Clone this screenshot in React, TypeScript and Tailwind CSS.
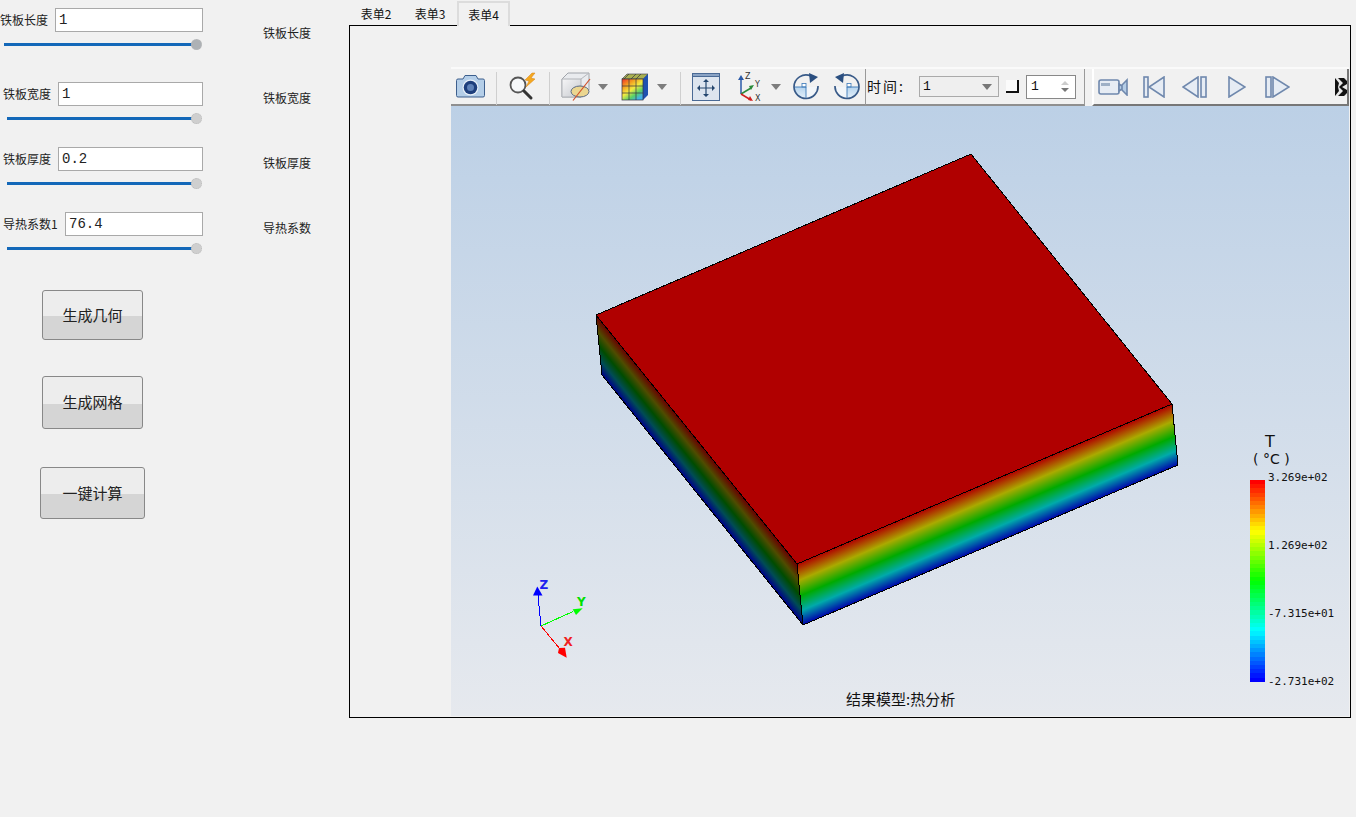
import React from "react";

const CJK = "font-['Noto_Sans_CJK_SC','Noto_Sans',sans-serif]";
const VAL = "font-['Liberation_Mono','Noto_Sans_CJK_SC',monospace]";
const MONO = "font-['DejaVu_Sans_Mono',monospace]";

function Group({ label, right, value, inputW, sliderW, handle, rightTop, mt, labelPl }: { label: string; right: string; value: string; inputW: string; sliderW: string; handle: string; rightTop: string; mt: string; labelPl: string }) {
  return (
    <div className={`flex ${mt}`}>
      <div className="w-[203px] shrink-0">
        <div className="flex h-6 items-center justify-between">
          <span className={`text-[12px] leading-none text-[#222] ${labelPl}`}>{label}</span>
          <div className={`flex h-6 items-center border border-[#a9a9a9] bg-white pl-[3px] pt-px text-[14px] text-[#222] ${VAL} ${inputW}`}>{value}</div>
        </div>
        <div className="mt-[6px] flex h-3 items-center justify-end pr-[1px]">
          <div className={`h-[3px] bg-[#1368b9] ${sliderW}`} />
          <div className={`-ml-[1px] h-[11px] w-[11px] rounded-full border border-dotted border-[#bbb] ${handle}`} />
        </div>
      </div>
      <span className={`ml-[60px] text-[12px] leading-none text-[#222] ${rightTop}`}>{right}</span>
    </div>
  );
}

function Btn({ text, cls }: { text: string; cls: string }) {
  return (
    <div className={`flex items-center justify-center rounded-[3px] border border-[#888] bg-[linear-gradient(to_bottom,#ededed_52%,#d5d5d5_52%)] text-[15px] text-[#222] ${cls}`}>
      {text}
    </div>
  );
}

const Sep = () => <div className="mt-[3px] h-[33px] w-px shrink-0 bg-[#cfcfcf]" />;
const Drop = () => (
  <svg width="10" height="6" viewBox="0 0 10 6"><path d="M0 0h10L5 6z" fill="#7d7d7d" /></svg>
);

function Camera() {
  return (
    <svg width="29" height="24" viewBox="0 0 29 24">
      <path d="M2 5h5l2-3.500h11L22 5h5a1.500 1.500 0 0 1 1.500 1.500v15A1.500 1.500 0 0 1 27 23H2a1.500 1.500 0 0 1-1.500-1.500v-15A1.500 1.500 0 0 1 2 5z" fill="#b4cee8" stroke="#3d5f8d" />
      <circle cx="14.500" cy="13.500" r="8" fill="#e8f0f8" />
      <circle cx="14.500" cy="13.500" r="6.800" fill="#1e3f7c" />
      <circle cx="14.500" cy="13.500" r="3.500" fill="#5f82b8" />
    </svg>
  );
}
function Search() {
  return (
    <svg width="30" height="30" viewBox="0 0 30 30">
      <circle cx="10" cy="13" r="7.500" fill="#f6f8fa" stroke="#555" strokeWidth="1.800" />
      <path d="M16 19l7 7" stroke="#333" strokeWidth="3" strokeLinecap="round" />
      <path d="M24 1l-7 7 4 1-3 6 9-8-4-1 4-5z" fill="#f4a820" stroke="#d88010" strokeWidth=".5" />
    </svg>
  );
}
function ClipCube() {
  return (
    <svg width="30" height="29" viewBox="0 0 30 29">
      <defs>
        <linearGradient id="cf" x1="0" y1="0" x2="1" y2="1"><stop offset="0" stopColor="#f6f6f7" /><stop offset="1" stopColor="#c6c9ce" /></linearGradient>
      </defs>
      <path d="M1 7l6-6h21v17l-8 7H1z" fill="#e9ebee" stroke="#a0a4aa" />
      <path d="M1 7h19v18H1z" fill="url(#cf)" stroke="#b0b3b8" />
      <path d="M20 7l8-6" stroke="#b5b8bd" />
      <ellipse cx="19" cy="19.500" rx="9" ry="5.500" fill="#ebd690" stroke="#5a6a85" />
      <path d="M12 28.500L29 7" stroke="#d0502a" strokeWidth="1.200" />
    </svg>
  );
}
function ColorCube() {
  return (
    <svg width="28" height="28" viewBox="0 0 28 28">
      <defs>
        <linearGradient id="cc" x1="0" y1="0" x2="0.7" y2="1">
          <stop offset="0" stopColor="#f03028" /><stop offset=".3" stopColor="#f4a020" /><stop offset=".55" stopColor="#f4ec40" /><stop offset=".8" stopColor="#58d068" /><stop offset="1" stopColor="#40b0e8" />
        </linearGradient>
      </defs>
      <path d="M1 6l5-5h21l-5 5z" fill="#a8b050" stroke="#334" strokeWidth=".6" />
      <path d="M22 6l5-5v21l-5 5z" fill="#1f52b0" />
      <rect x="1" y="6" width="21" height="21" fill="url(#cc)" stroke="#334" strokeWidth=".7" />
      <path d="M8 6v21M15 6v21M1 13h21M1 20h21M8 1l-5 5M15 1l-5 5M20 1l-5 5" stroke="#334" strokeWidth=".7" />
    </svg>
  );
}
function Fit() {
  return (
    <svg width="28" height="28" viewBox="0 0 28 28">
      <rect x=".5" y=".5" width="27" height="27" fill="#dde5ef" stroke="#4a6a95" />
      <rect x=".5" y=".5" width="27" height="3" fill="#8aa3c4" stroke="#4a6a95" />
      <path d="M14 8v14M7 15h14" stroke="#24466e" strokeWidth="1.200" />
      <path d="M14 6l-3 3h6zM14 24l-3-3h6zM5 15l3-3v6zM23 15l-3-3v6z" fill="#24466e" />
    </svg>
  );
}
function Axes() {
  return (
    <svg width="26" height="30" viewBox="0 0 26 30" fontFamily="'DejaVu Sans',sans-serif" fontSize="8">
      <path d="M4 22V6" stroke="#2a5aa8" strokeWidth="1.500" />
      <path d="M4 3L1 8h6z" fill="#2a5aa8" />
      <path d="M4 22l10-6" stroke="#2a8a3a" strokeWidth="1.500" />
      <path d="M17 13l-5 1 2 4z" fill="#2a8a3a" />
      <path d="M4 22l10 6" stroke="#d02020" strokeWidth="1.500" />
      <path d="M16 29l-5-1 2-4z" fill="#d02020" />
      <text x="8" y="7" fill="#333">Z</text>
      <text x="18" y="15" fill="#333">Y</text>
      <text x="18" y="29" fill="#333">X</text>
    </svg>
  );
}
function Rotate({ flip }: { flip?: boolean }) {
  return (
    <svg width="28" height="28" viewBox="0 0 28 28" className={flip ? "-scale-x-100" : ""}>
      <defs>
        <linearGradient id="rq" x1="0" y1="0" x2="0" y2="1"><stop offset="0" stopColor="#b6d4ee" /><stop offset="1" stopColor="#e6f1fa" /></linearGradient>
      </defs>
      <path d="M2 14h24a12 12 0 0 1-24 0z" fill="#f2f6fa" />
      <path d="M2 14h12v12A12 12 0 0 1 2 14z" fill="url(#rq)" />
      <rect x="10" y="10.500" width="4" height="3.500" fill="#fff" stroke="#3a78b8" strokeWidth=".8" />
      <path d="M2 14h12v12" fill="none" stroke="#3a78b8" strokeWidth=".9" />
      <path d="M2 14A12 12 0 0 1 19 3.100M26 13a12 12 0 1 1-24 1" fill="none" stroke="#385a88" strokeWidth="1.700" />
      <path d="M17 0l9 4-8 6z" fill="#2b4f80" />
    </svg>
  );
}
const Svg = ({ w, h, children }: { w: number; h: number; children: React.ReactNode }) => (
  <svg width={w} height={h} viewBox={`0 0 ${w} ${h}`} fill="#e6ecf4" stroke="#6f88ad" strokeWidth="1.600">{children}</svg>
);

function Toolbar() {
  return (
    <div className="flex h-[39px] shrink-0 border-t-2 border-t-[#fafafa]">
      <div className="flex h-full w-[414px] shrink-0 border-b-2 border-b-[#8f8f8f]">
        <div className="flex w-[45px] shrink-0 items-center justify-center pb-[2px] pr-[6px]"><Camera /></div>
        <Sep />
        <div className="flex w-[52px] shrink-0 items-center justify-center"><Search /></div>
        <Sep />
        <div className="flex w-[130px] shrink-0 items-center pl-[11px]">
          <ClipCube />
          <div className="ml-[7px]"><Drop /></div>
          <div className="ml-[13px]"><ColorCube /></div>
          <div className="ml-[8px]"><Drop /></div>
        </div>
        <Sep />
        <div className="flex flex-1 items-center pl-[11px]">
          <Fit />
          <div className="ml-[17px]"><Axes /></div>
          <div className="ml-[8px]"><Drop /></div>
          <div className="ml-[11px]"><Rotate /></div>
          <div className="ml-[13px]"><Rotate flip /></div>
        </div>
      </div>
      <div className="flex h-full w-[220px] shrink-0 items-center border-x border-b-2 border-x-[#999] border-b-[#8f8f8f] pl-px">
        <span className="w-[52px] shrink-0 text-[14px] tracking-[2px] text-[#111]">时间:</span>
        <div className={`flex h-[21px] w-[80px] shrink-0 items-center justify-between border border-[#aaa] bg-[#efefef] pl-[3px] pr-[6px] text-[13px] text-[#111] ${VAL}`}>
          <span>1</span>
          <svg width="10" height="6" viewBox="0 0 10 6"><path d="M0 0h10L5 6z" fill="#777" /></svg>
        </div>
        <div className="ml-[7px] h-[13px] w-[13px] shrink-0 border-r-2 border-b-2 border-r-[#111] border-b-[#111] bg-[#fbfbfb]" />
        <div className={`ml-[7px] flex h-[24px] w-[50px] shrink-0 items-center justify-between border border-[#888] bg-white pl-[4px] pr-[6px] text-[13px] text-[#111] ${VAL}`}>
          <span>1</span>
          <svg width="8" height="13" viewBox="0 0 8 13"><path d="M4 1l4 4H0z" fill="#ccc" /><path d="M4 12l4-4H0z" fill="#777" /></svg>
        </div>
      </div>
      <div className="ml-[7px] flex h-full flex-1 items-center border-l-2 border-r-2 border-b-2 border-l-white border-r-[#777] border-b-[#777] bg-[#f1f1f1]">
        <div className="ml-[4px]">
          <Svg w={30} h={18}>
            <rect x="1" y="2" width="20" height="14" rx="2" />
            <rect x="3" y="5" width="9" height="3" fill="#9eb0c6" stroke="none" />
            <path d="M21 6l3 2v3l-3 2zM29 2v15l-5-5V7z" fill="#b5cde6" />
          </Svg>
        </div>
        <div className="ml-[15px]">
          <Svg w={22} h={22}>
            <rect x="1" y="1" width="4" height="20" />
            <path d="M21 1v20L6 11z" />
          </Svg>
        </div>
        <div className="ml-[17px]">
          <Svg w={25} h={22}>
            <path d="M16 1v20L1 11z" />
            <rect x="19" y="1" width="5" height="20" />
          </Svg>
        </div>
        <div className="ml-[20px]">
          <Svg w={19} h={22}>
            <path d="M2 1v20l16-10z" />
          </Svg>
        </div>
        <div className="ml-[19px]">
          <Svg w={25} h={22}>
            <rect x="1" y="1" width="5" height="20" />
            <path d="M8 1v20l16-10z" />
          </Svg>
        </div>
        <div className="ml-[45px]">
          <svg width="12" height="18" viewBox="0 0 12 18">
            <rect width="12" height="18" fill="#111" />
            <path d="M0 0h3l5 5-4 4 4 4-5 5H0l4-5-1-4 1-4zM9 0h3v3zM9 18h3v-3zM7 9l5-3v6z" fill="#e8e8e8" />
          </svg>
        </div>
      </div>
    </div>
  );
}

function Scene() {
  return (
    <svg viewBox="451 106 898 610" className="absolute inset-0 h-full w-full">
      <defs>
        <linearGradient id="front" gradientUnits="userSpaceOnUse" x1="797" y1="564" x2="820" y2="618">
          <stop offset="0" stopColor="#b00000" />
          <stop offset=".27" stopColor="#aaaa00" />
          <stop offset=".52" stopColor="#00aa00" />
          <stop offset=".76" stopColor="#00aaaa" />
          <stop offset="1" stopColor="#0000aa" />
        </linearGradient>
        <linearGradient id="side" gradientUnits="userSpaceOnUse" x1="596" y1="315" x2="570.3" y2="335.700">
          <stop offset="0" stopColor="#6a0000" />
          <stop offset=".27" stopColor="#4f4c00" />
          <stop offset=".52" stopColor="#004c00" />
          <stop offset=".76" stopColor="#004c55" />
          <stop offset="1" stopColor="#00008a" />
        </linearGradient>
      </defs>
      <polygon points="596,315 797,564 803,625 602,375" fill="url(#side)" shapeRendering="crispEdges" />
      <polygon points="797,564 1172,404 1178,465 803,625" fill="url(#front)" shapeRendering="crispEdges" />
      <polygon points="596,315 971,154 1172,404 797,564" fill="#b00000" shapeRendering="crispEdges" />
      <path d="M596 315L971 154L1172 404L797 564ZM596 315L602 375L803 625L1178 465L1172 404M797 564L803 625" fill="none" stroke="#000" strokeWidth="1" shapeRendering="crispEdges" />
      <g fontFamily="'DejaVu Sans',sans-serif" fontWeight="700" fontSize="12">
        <path d="M541 626L538 595" stroke="#0000ff" strokeWidth="1" shapeRendering="crispEdges" />
        <path d="M537.300 586.500L533 595.500H542.500z" fill="#0000ff" />
        <text x="539.500" y="589" fill="#2020f0">Z</text>
        <path d="M541 626L573 611.500" stroke="#00ff00" strokeWidth="1" shapeRendering="crispEdges" />
        <path d="M572.700 609.300L582.700 608.300L576 615z" fill="#00ff00" />
        <text x="577" y="606" fill="#00e000">Y</text>
        <path d="M541 626L560 649" stroke="#ff0000" strokeWidth="1" shapeRendering="crispEdges" />
        <path d="M559 648L565 647.700L566.700 657.700L558 653z" fill="#ff0000" />
        <text x="563.500" y="646" fill="#f02020">X</text>
      </g>
    </svg>
  );
}

const bandColor = (t: number) => {
  const s = [[255, 0, 0], [255, 255, 0], [0, 255, 0], [0, 255, 255], [0, 0, 255]];
  const p = Math.min(t * 4, 3.9999);
  const i = Math.floor(p);
  const f = p - i;
  return `rgb(${s[i].map((c, k) => Math.round(c + (s[i + 1][k] - c) * f)).join(",")})`;
};
const bands = Array.from({ length: 48 }, (_, i) => bandColor(i / 47));

function Legend() {
  return (
    <div className="absolute left-[799px] top-[327px] flex flex-col">
      <div className="ml-[15px] text-[16px] leading-[18px] text-[#111] font-['DejaVu_Sans',sans-serif]">T</div>
      <div className="ml-[3px] w-[48px] whitespace-pre text-[14px] leading-[17px] text-[#111] font-['DejaVu_Sans',sans-serif]">( °C )</div>
      <div className="mt-[12px] flex">
        <div className="flex h-[202px] w-[15px] flex-col">
          {bands.map((c, i) => <div key={i} className="flex-1" style={{ backgroundColor: c }} />)}
        </div>
        <div className={`-mt-[10px] ml-[3px] flex h-[220px] flex-col justify-between text-[11px] leading-[16px] text-[#111] ${MONO}`}>
          <span>3.269e+02</span>
          <span>1.269e+02</span>
          <span>-7.315e+01</span>
          <span>-2.731e+02</span>
        </div>
      </div>
    </div>
  );
}

export default function App() {
  return (
    <div className={`flex h-[817px] w-[1356px] overflow-hidden bg-[#f1f1f1] ${CJK}`}>
      <aside className="w-[349px] shrink-0 pt-2">
        <Group label="铁板长度" right="铁板长度" value="1" inputW="w-[148px]" sliderW="w-[188px]" handle="bg-[#adb1b5]" rightTop="mt-[19px]" mt="" labelPl="" />
        <Group label="铁板宽度" right="铁板宽度" value="1" inputW="w-[145px]" sliderW="w-[185px]" handle="bg-[#cfcfcf]" rightTop="mt-[10px]" mt="mt-[32px]" labelPl="pl-[3px]" />
        <Group label="铁板厚度" right="铁板厚度" value="0.2" inputW="w-[145px]" sliderW="w-[185px]" handle="bg-[#cfcfcf]" rightTop="mt-[10px]" mt="mt-[23px]" labelPl="pl-[3px]" />
        <Group label="导热系数1" right="导热系数" value="76.4" inputW="w-[138px]" sliderW="w-[185px]" handle="bg-[#cfcfcf]" rightTop="mt-[10px]" mt="mt-[23px]" labelPl="pl-[3px]" />
        <Btn text="生成几何" cls="ml-[42px] mt-[36px] h-[50px] w-[101px]" />
        <Btn text="生成网格" cls="ml-[42px] mt-[36px] h-[53px] w-[101px]" />
        <Btn text="一键计算" cls="ml-[40px] mt-[38px] h-[52px] w-[105px]" />
      </aside>
      <main className="w-[1002px] shrink-0">
        <div className="flex h-[25px] text-[12px] text-[#111]">
          <div className="flex w-[54px] items-center justify-center pt-[3px]">表单2</div>
          <div className="flex w-[54px] items-center justify-center pt-[3px]">表单3</div>
          <div className="relative z-10 mt-px flex h-[25px] w-[53px] items-center justify-center border-x-2 border-t-2 border-[#dcdcdc] bg-[#f1f1f1] pt-[1px]">表单4</div>
        </div>
        <div className="flex h-[693px] flex-col border border-black pb-px pl-[101px] pr-px pt-[41px]">
          <Toolbar />
          <div className="relative flex-1 bg-[linear-gradient(to_bottom,#bcd0e6,#e6e9ee)]">
            <Scene />
            <Legend />
            <div className="absolute bottom-[7px] left-[395px] text-[15px] leading-[20px] text-[#111]">结果模型:热分析</div>
          </div>
        </div>
      </main>
    </div>
  );
}
